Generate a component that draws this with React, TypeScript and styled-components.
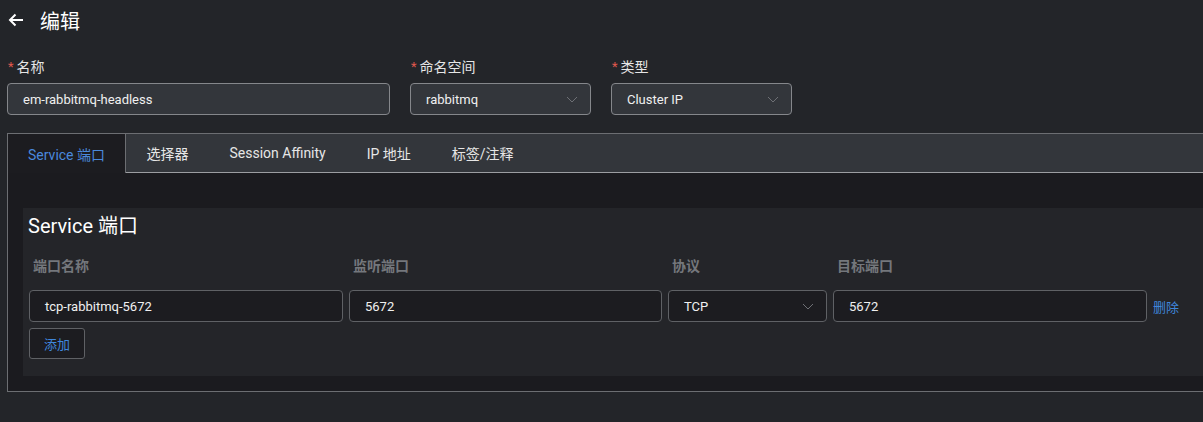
import React from "react";
import styled, { createGlobalStyle } from "styled-components";

const Global = createGlobalStyle`
  html, body { margin: 0; padding: 0; background: #232529; overflow: hidden; }
  body { font-family: Roboto, "Noto Sans CJK SC", sans-serif; color: #e6e6e6; }
  * { box-sizing: border-box; }
`;

const Page = styled.div`
  width: 1203px;
  height: 422px;
  background: #232529;
  overflow: hidden;
`;

const Header = styled.div`
  display: flex;
  align-items: center;
  height: 40px;
  padding-left: 8px;
  gap: 16px;
`;

const Title = styled.h1`
  margin: 0;
  font-size: 20px;
  font-weight: 400;
  color: #ffffff;
  font-family: "Noto Sans CJK SC", sans-serif;
`;

const FormRow = styled.div`
  display: flex;
  gap: 20px;
  padding-left: 7px;
  margin-top: 16px;
`;

const Field = styled.div<{ $w: number }>`
  width: ${(p) => p.$w}px;
  display: flex;
  flex-direction: column;
  gap: 7px;
`;

const Label = styled.label`
  display: flex;
  align-items: center;
  height: 20px;
  font-size: 14px;
  color: #e6e6e6;
  font-family: "Noto Sans CJK SC", sans-serif;
  &::before {
    content: "*";
    color: #e0584e;
    font-family: Roboto, sans-serif;
    margin-right: 3px;
    margin-left: 1px;
    font-size: 13px;
  }
`;

const Input = styled.div<{ $dark?: boolean }>`
  height: 32px;
  display: flex;
  align-items: center;
  justify-content: space-between;
  padding: 0 12px 0 15px;
  font-size: 13px;
  color: #f0f0f0;
  background: ${(p) => (p.$dark ? "#1c1c20" : "#33363b")};
  border: 1px solid ${(p) => (p.$dark ? "#5f6165" : "#85878b")};
  border-radius: 4px;
`;

const Chevron = () => (
  <svg width="12" height="7" viewBox="0 0 12 7" fill="none">
    <path d="M1 1l5 5 5-5" stroke="#6e7075" strokeWidth="1" />
  </svg>
);

const Arrow = () => (
  <svg width="16" height="14" viewBox="0 0 16 14" fill="none">
    <path d="M15 7H2M7.5 1.5L2 7l5.5 5.5" stroke="#ffffff" strokeWidth="2" />
  </svg>
);

const TabsBox = styled.div`
  margin: 18px 0 0 7px;
  width: 1210px;
  border: 1px solid #6c6e72;
`;

const TabBar = styled.div`
  display: flex;
  height: 39px;
  background: #33363b;
  border-bottom: 1px solid #9c9ea2;
`;

const Tab = styled.div<{ $active?: boolean }>`
  display: flex;
  align-items: center;
  white-space: nowrap;
  flex-shrink: 0;
  padding: 0 20.5px;
  height: ${(p) => (p.$active ? "39px" : "38px")};
  font-size: 14px;
  color: ${(p) => (p.$active ? "#4a89dc" : "#e6e6e6")};
  background: ${(p) => (p.$active ? "#1c1c20" : "transparent")};
  border-right: ${(p) => (p.$active ? "1px solid #6c6e72" : "none")};
  ${(p) => (p.$active ? "padding-left: 20px; padding-right: 20px;" : "")}
`;

const TabContent = styled.div`
  background: #1b1b1f;
  padding: 35px 0 15px 15px;
`;

const Card = styled.div`
  background: #242529;
  padding: 4px 0 17px 6px;
`;

const CardTitle = styled.h2`
  margin: 0 0 0 -1px;
  font-size: 20px;
  line-height: 28px;
  font-weight: 400;
  color: #ffffff;
`;

const Grid = styled.div`
  display: grid;
  grid-template-columns: 314px 313px 159px 314px auto;
  column-gap: 6px;
  align-items: center;
`;

const ColHead = styled.div`
  font-size: 14px;
  line-height: 18px;
  font-weight: 700;
  color: #74777c;
  padding-left: 4px;
  margin: 16px 0 16px;
  font-family: "Noto Sans CJK SC", sans-serif;
`;

const LinkText = styled.span`
  font-size: 13px;
  color: #3f86dc;
  font-family: "Noto Sans CJK SC", sans-serif;
`;

const AddButton = styled.button`
  margin-top: 6px;
  width: 56px;
  height: 31px;
  background: #1c1c20;
  border: 1px solid #5f6165;
  border-radius: 3px;
  color: #3f86dc;
  font-size: 13px;
  font-family: "Noto Sans CJK SC", sans-serif;
  padding: 0;
`;

export default function App() {
  return (
    <Page>
      <Global />
      <Header>
        <Arrow />
        <Title>编辑</Title>
      </Header>
      <FormRow>
        <Field $w={383}>
          <Label>名称</Label>
          <Input>em-rabbitmq-headless</Input>
        </Field>
        <Field $w={181}>
          <Label>命名空间</Label>
          <Input>
            rabbitmq
            <Chevron />
          </Input>
        </Field>
        <Field $w={181}>
          <Label>类型</Label>
          <Input>
            Cluster IP
            <Chevron />
          </Input>
        </Field>
      </FormRow>
      <TabsBox>
        <TabBar>
          <Tab $active>Service 端口</Tab>
          <Tab>选择器</Tab>
          <Tab>Session Affinity</Tab>
          <Tab>IP 地址</Tab>
          <Tab>标签/注释</Tab>
        </TabBar>
        <TabContent>
          <Card>
            <CardTitle>Service 端口</CardTitle>
            <Grid>
              <ColHead>端口名称</ColHead>
              <ColHead>监听端口</ColHead>
              <ColHead>协议</ColHead>
              <ColHead>目标端口</ColHead>
              <span />
              <Input $dark>tcp-rabbitmq-5672</Input>
              <Input $dark>5672</Input>
              <Input $dark>
                TCP
                <Chevron />
              </Input>
              <Input $dark>5672</Input>
              <LinkText>删除</LinkText>
            </Grid>
            <AddButton>添加</AddButton>
          </Card>
        </TabContent>
      </TabsBox>
    </Page>
  );
}
